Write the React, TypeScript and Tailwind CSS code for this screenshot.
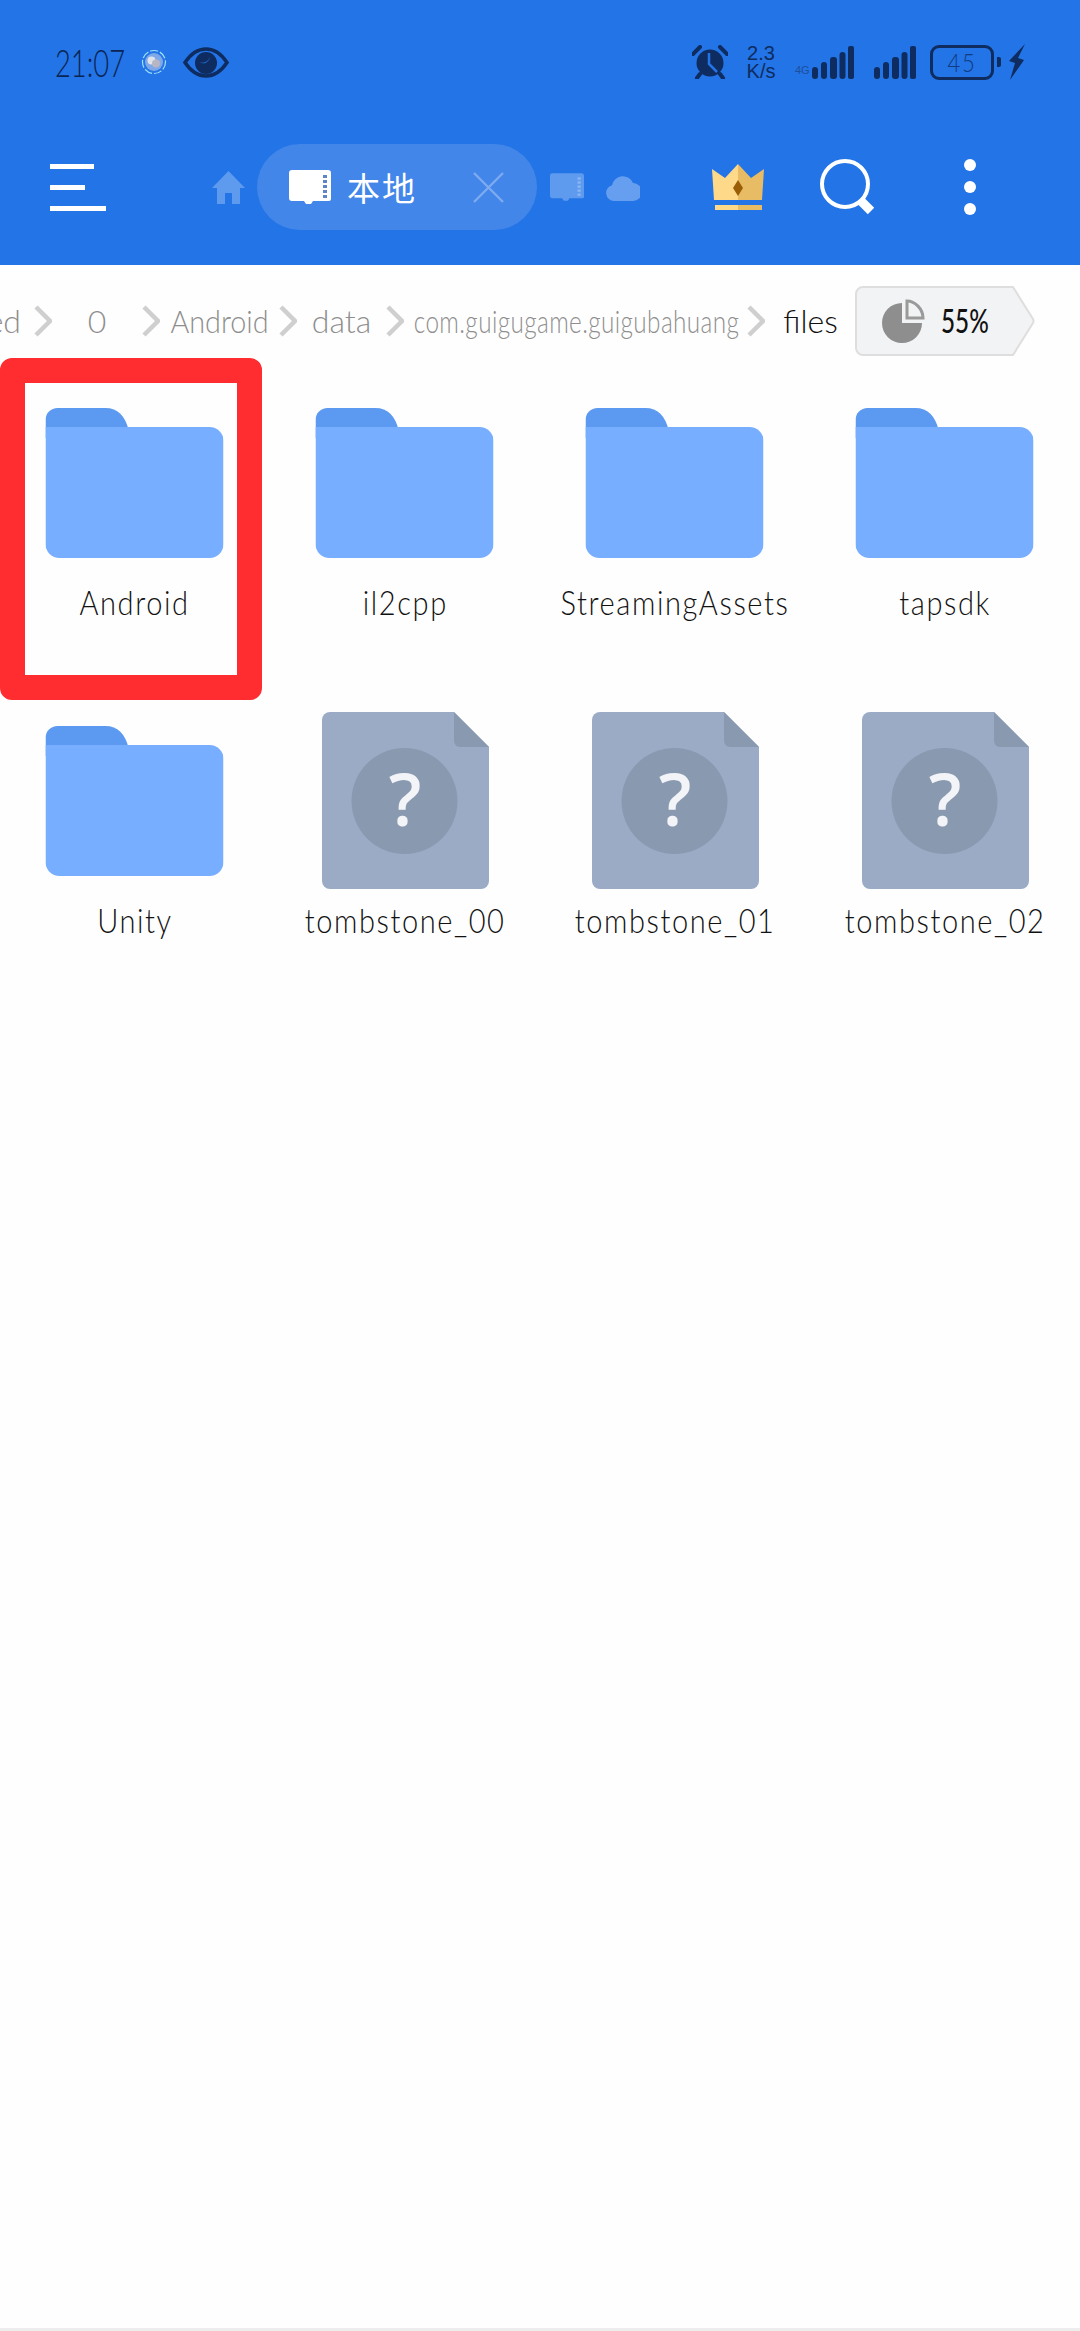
import React from "react";

const hand = "font-['Lato','Noto_Sans_CJK_SC',sans-serif] font-light";

function Chevron({ className = "" }: { className?: string }) {
  return (
    <svg width="18" height="32" viewBox="0 0 18 32" className={"shrink-0 " + className}>
      <polyline points="2,2 16,16 2,30" fill="none" stroke="#cfcfcf" strokeWidth="4.5" />
    </svg>
  );
}

function SdCard({ w, h, color, dots }: { w: number; h: number; color: string; dots: string }) {
  return (
    <svg width={w} height={h} viewBox="0 0 42 34">
      <path d="M3 0H39a3 3 0 0 1 3 3V29a2 2 0 0 1-2 2H24l-2 3H17l-2-3H3a3 3 0 0 1-3-3V3a3 3 0 0 1 3-3Z" fill={color} />
      {[5, 10, 15, 20, 25].map((y) => (
        <rect key={y} x="34" y={y} width="4" height="3" fill={dots} />
      ))}
    </svg>
  );
}

function Bars() {
  return (
    <svg width="42" height="33" viewBox="0 0 42 33">
      <rect x="0" y="21" width="6" height="12" rx="3" fill="#0e2c5f" />
      <rect x="9" y="16" width="6" height="17" rx="3" fill="#0e2c5f" />
      <rect x="18" y="11" width="7" height="22" rx="3" fill="#0e2c5f" />
      <rect x="27.5" y="6" width="6" height="27" rx="3" fill="#0e2c5f" />
      <rect x="36" y="0" width="6" height="33" rx="2" fill="#0e2c5f" />
    </svg>
  );
}

function FolderIcon() {
  return (
    <svg width="178" height="150" viewBox="0 0 178 150" className="mt-[14px] -translate-x-[0.5px]">
      <path d="M0 30V12A12 12 0 0 1 12 0H60C72 0 80 8 83 22V30Z" fill="#5c9af2" />
      <path d="M0 19H164a14 14 0 0 1 14 14V136a14 14 0 0 1-14 14H14a14 14 0 0 1-14-14Z" fill="#78aeff" />
    </svg>
  );
}

function FileIcon() {
  return (
    <svg width="167" height="177" viewBox="0 0 167 177">
      <path d="M8 0H132L167 35V169a8 8 0 0 1-8 8H8a8 8 0 0 1-8-8V8a8 8 0 0 1 8-8Z" fill="#9babc6" />
      <path d="M132 0L167 35H138a6 6 0 0 1-6-6Z" fill="#8999b0" />
      <circle cx="82.5" cy="89" r="53" fill="#8999b0" />
      <text x="83" y="114" textAnchor="middle" fontSize="72" fontFamily="'Open Sans',sans-serif" fontWeight="600" fill="#f2f4f8">?</text>
    </svg>
  );
}

function Cell({ name, file }: { name: string; file?: boolean }) {
  return (
    <div className="h-[318px] flex flex-col items-center">
      <div className="h-[177px] flex justify-center items-start">{file ? <FileIcon /> : <FolderIcon />}</div>
      <div className={hand + " mt-[11px] text-[33px] leading-[40px] tracking-[1.8px] text-[#111111] whitespace-nowrap scale-x-[0.88]"}>{name}</div>
    </div>
  );
}

export default function App() {
  return (
    <div className="relative w-[1080px] h-[2331px] bg-[#fefefe] overflow-hidden flex flex-col border-b-[3px] border-[#ededed]">
      <header className="h-[265px] bg-[#2374e6] flex flex-col shrink-0">
        {/* status bar */}
        <div className="h-[144px] flex items-start justify-between pt-[44px] pl-[55px] pr-[55px]">
          <div className="flex items-center h-[36px]">
            <span className={hand + " text-[38px] leading-[36px] text-[#0a2554] w-[67px] whitespace-nowrap origin-left scale-x-[0.72]"}>21:07</span>
            <svg width="26" height="26" viewBox="0 0 26 26" className="ml-[19px]">
              <circle cx="13" cy="13" r="11.5" fill="none" stroke="#9fe2ff" strokeWidth="1.2" strokeDasharray="8 2" />
              <circle cx="13" cy="13" r="9" fill="#7fa8e8" />
              <circle cx="10.5" cy="11.5" r="4" fill="#dfe3ea" />
              <circle cx="15" cy="14.5" r="4" fill="#b9b6c4" />
            </svg>
            <svg width="46" height="31" viewBox="0 0 46 31" className="ml-[16px]">
              <path d="M2 15.5C9 5 16 2 23 2s14 3 21 13.5C37 26 30 29 23 29S9 26 2 15.5Z" fill="none" stroke="#0e2c5f" strokeWidth="3.5" />
              <circle cx="23" cy="16" r="11" fill="#0e2c5f" />
              <path d="M16 15a8 8 0 0 0 11-5 7 7 0 0 1-11 5Z" fill="#2374e6" />
            </svg>
          </div>
          <div className="flex items-center h-[36px]">
            <svg width="36" height="34" viewBox="0 0 36 34">
              <circle cx="18" cy="18" r="13.5" fill="#0e2c5f" />
              <path d="M17 8V19L25 27" fill="none" stroke="#2374e6" strokeWidth="2.5" />
              <path d="M1 9L8 2M35 9L28 2" stroke="#0e2c5f" strokeWidth="4" strokeLinecap="round" />
              <path d="M8 29L5 33M28 29L31 33" stroke="#0e2c5f" strokeWidth="4" strokeLinecap="round" />
            </svg>
            <div className="ml-[16px] w-[34px] flex flex-col items-center font-['Liberation_Sans',sans-serif] text-[20px] leading-[18px] text-[#0e2c5f]">
              <span>2.3</span>
              <span className="whitespace-nowrap">K/s</span>
            </div>
            <span className="ml-[17px] w-[12px] mt-[16px] text-[11px] leading-[12px] text-[#1d4f9c] font-['Liberation_Sans',sans-serif]">4G</span>
            <span className="ml-[5px]"><Bars /></span>
            <span className="ml-[20px]"><Bars /></span>
            <div className="ml-[14px] w-[64px] h-[35px] rounded-[9px] border-[3px] border-[#0e2c5f] flex items-center justify-center">
              <span className={hand + " text-[26px] leading-[24px] tracking-[2px] text-[#113a80] scale-x-[0.85]"}>45</span>
            </div>
            <div className="ml-[3px] w-[4px] h-[10px] rounded-r-[2px] bg-[#0e2c5f]" />
            <svg width="17" height="36" viewBox="0 0 17 36" className="ml-[7px]">
              <path d="M17 0L1 17L7 19L2 36L16 16L10 14Z" fill="#0e2c5f" />
            </svg>
          </div>
        </div>
        {/* toolbar */}
        <div className="h-[86px] flex items-center">
          <div className="ml-[50px] w-[56px] flex flex-col gap-[16px]">
            <div className="w-[44px] h-[5px] bg-white" />
            <div className="w-[35px] h-[5px] bg-white" />
            <div className="w-[56px] h-[5px] bg-white" />
          </div>
          <svg width="33" height="33" viewBox="0 0 33 33" className="ml-[106px]">
            <path d="M16.5 0L33 17H28V33H20V22H13V33H5V17H0Z" fill="#5e9bef" />
          </svg>
          <div className="ml-[12px] w-[280px] h-[86px] rounded-full bg-[#4286e9] flex items-center">
            <span className="ml-[32px]"><SdCard w={42} h={34} color="#ffffff" dots="#5d86c6" /></span>
            <span className="font-['Noto_Sans_CJK_SC',sans-serif] ml-[16px] w-[70px] text-[33px] leading-[40px] text-white tracking-[2px] whitespace-nowrap">本地</span>
            <svg width="31" height="31" viewBox="0 0 31 31" className="ml-[56px]">
              <path d="M1 1L30 30M30 1L1 30" stroke="#7eaaef" strokeWidth="2.4" />
            </svg>
          </div>
          <span className="ml-[13px]"><SdCard w={34} h={28} color="#5e9bef" dots="#8ab4f2" /></span>
          <svg width="34" height="28" viewBox="0 0 34 28" className="ml-[22px]">
            <path d="M8 28a8 8 0 0 1-2-15.7A11 11 0 0 1 27 10a9 9 0 0 1 0 18Z" fill="#669ff0" />
          </svg>
          <svg width="52" height="46" viewBox="0 0 52 46" className="ml-[72px]">
            <path d="M0 5L13 14L26 0V36H2Z" fill="#ffd98a" />
            <path d="M52 5L39 14L26 0V36H50Z" fill="#e8bb65" />
            <path d="M26 16L31 24L26 32L21 24Z" fill="#9a5f06" />
            <path d="M3 41H26V46H3Z" fill="#ffd98a" />
            <path d="M26 41H50V46H26Z" fill="#e8bb65" />
          </svg>
          <svg width="56" height="56" viewBox="0 0 56 56" className="ml-[56px]">
            <circle cx="25" cy="25" r="23" fill="none" stroke="#ffffff" strokeWidth="4" />
            <path d="M40 41L51 52" stroke="#ffffff" strokeWidth="9" />
          </svg>
          <div className="ml-[88px] flex flex-col gap-[10px]">
            <div className="w-[12px] h-[12px] rounded-full bg-white" />
            <div className="w-[12px] h-[12px] rounded-full bg-white" />
            <div className="w-[12px] h-[12px] rounded-full bg-white" />
          </div>
        </div>
      </header>

      {/* breadcrumb */}
      <div className={hand + " h-[112px] flex items-center shrink-0 overflow-hidden text-[32px] text-[#8e8e8e] whitespace-nowrap"}>
        <span className="-ml-[129px] w-[150px] text-right">emulated</span>
        <Chevron className="ml-[13px]" />
        <span className="ml-[39px] w-[12px] flex justify-center">0</span>
        <Chevron className="ml-[39px]" />
        <span className="ml-[12px] w-[95px] flex justify-center scale-x-[0.9]">Android</span>
        <Chevron className="ml-[12px]" />
        <span className="ml-[18px] w-[53px] flex justify-center">data</span>
        <Chevron className="ml-[18px]" />
        <span className="ml-[12px] w-[321px] flex justify-center tracking-[0.5px] scale-x-[0.76]">com.guigugame.guigubahuang</span>
        <Chevron className="ml-[10px]" />
        <span className="ml-[19px] w-[53px] flex justify-center text-[#111111]">files</span>
        <div className="relative ml-[18px] w-[180px] h-[70px] flex items-center shrink-0">
          <svg width="180" height="70" viewBox="0 0 180 70" className="absolute inset-0">
            <path d="M8 1H158L178 33Q179 35 178 37L158 69H8a7 7 0 0 1-7-7V8a7 7 0 0 1 7-7Z" fill="#f2f3f5" stroke="#dedede" strokeWidth="2" />
          </svg>
          <svg width="44" height="44" viewBox="0 0 44 44" className="relative ml-[27px]">
            <path d="M20 4A20 20 0 1 0 40 24H20Z" fill="#8e8e8e" />
            <path d="M25 2C33 2 41 10 41 19H25Z" fill="none" stroke="#9a9a9a" strokeWidth="3" />
          </svg>
          <span className="relative ml-[15px] text-[32px] leading-[40px] font-medium text-[#111111] origin-left scale-x-[0.76]">55%</span>
        </div>
      </div>

      {/* grid */}
      <div className="grid grid-cols-4 pt-[17px]">
        <Cell name="Android" />
        <Cell name="il2cpp" />
        <Cell name="StreamingAssets" />
        <Cell name="tapsdk" />
        <Cell name="Unity" />
        <Cell name="tombstone_00" file />
        <Cell name="tombstone_01" file />
        <Cell name="tombstone_02" file />
      </div>

      {/* red annotation */}
      <div className="absolute left-0 top-[358px] w-[262px] h-[342px] border-[25px] border-[#ff2d2f] rounded-[12px]" />
    </div>
  );
}
